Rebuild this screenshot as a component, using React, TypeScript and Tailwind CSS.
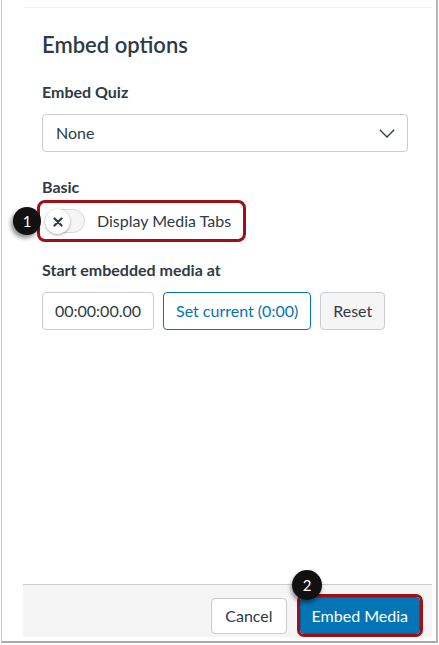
import React from "react";

function ChevronDown() {
  return (
    <svg width="16" height="9" viewBox="0 0 16 9" fill="none">
      <polyline points="0.8,0.8 8,8 15.2,0.8" stroke="#2d3b45" strokeWidth="1.3" fill="none" />
    </svg>
  );
}

function XIcon() {
  return (
    <svg width="10" height="10" viewBox="0 0 10 10">
      <path d="M1.5 1.5 L8.5 8.5 M8.5 1.5 L1.5 8.5" stroke="#2d3b45" strokeWidth="2.2" strokeLinecap="round" />
    </svg>
  );
}

export default function App() {
  return (
    <div className="relative w-[439px] h-[645px] bg-white font-['Lato','Noto_Sans',sans-serif] text-[#2d3b45]">
      <div className="ml-[1px] w-[437px] h-[643px] border-l border-r-2 border-b-2 border-l-[#c9c9c9] border-r-[#b5b5b5] border-b-[#a9a9a9] flex flex-col">
        <div className="ml-[21px] w-[409px] mt-[7px] border-t border-[#f3f3f3] flex-1 flex flex-col">
          <div className="pl-[19px] pr-[24px] flex flex-col">
            <div className="mt-[24px] text-[22px] leading-[25px] font-semibold">Embed options</div>
            <div className="mt-[23px] text-base leading-6 font-bold">Embed Quiz</div>
            <div className="mt-[10px] h-[38px] border border-[#c7cdd1] rounded-[4px] flex items-center justify-between pl-[13px] pr-[12px]">
              <span className="text-base">None</span>
              <ChevronDown />
            </div>
            <div className="mt-[23px] text-base leading-6 font-bold">Basic</div>
            <div className="mt-[1px] -ml-[5px] self-start h-[42px] border-[3px] border-[#a00f16] rounded-[8px] flex items-center pl-[5px] pr-[12px]">
              <div className="relative w-[40px] h-[24px] rounded-full bg-[#f5f5f5] border border-[#d7dadd]">
                <div className="absolute -left-[1px] -top-[1px] w-[25px] h-[25px] rounded-full bg-white shadow-[0_1px_3px_rgba(0,0,0,0.35)] flex items-center justify-center">
                  <XIcon />
                </div>
              </div>
              <span className="ml-[12px] text-base">Display Media Tabs</span>
            </div>
            <div className="mt-[16px] text-base leading-6 font-bold">Start embedded media at</div>
            <div className="mt-[10px] flex items-center gap-[9px]">
              <div className="w-[112px] h-[38px] border border-[#c7cdd1] rounded-[4px] flex items-center pl-[12px] text-base">00:00:00.00</div>
              <div className="h-[38px] border border-[#0374b5] rounded-[4px] flex items-center px-[12px] text-base text-[#0374b5]">Set current (0:00)</div>
              <div className="h-[38px] border border-[#c7cdd1] bg-[#f5f5f5] rounded-[4px] flex items-center px-[12px] text-base">Reset</div>
            </div>
          </div>
          <div className="flex-1" />
          <div className="mb-[4px] h-[53px] border-t border-[#c7cdd1] bg-[#f5f5f5] flex items-start justify-end pr-[9px] pt-[9px] gap-[10px]">
            <div className="mt-[4px] h-[36px] px-[13px] bg-white border border-[#c7cdd1] rounded-[4px] flex items-center text-base">Cancel</div>
            <div className="border-[3px] border-[#a00f16] rounded-[7px]">
              <div className="h-[37px] px-[11px] bg-[#0374b5] border border-[#03609a] rounded-[4px] flex items-center text-base text-white">Embed Media</div>
            </div>
          </div>
        </div>
      </div>
      <div className="absolute left-[13px] top-[207px] w-[28px] h-[28px] rounded-full bg-[#111] text-white text-[15px] flex items-center justify-center shadow-[-2px_3px_4px_rgba(0,0,0,0.45)]">1</div>
      <div className="absolute left-[292px] top-[570px] w-[30px] h-[30px] rounded-full bg-[#111] text-white text-[15px] flex items-center justify-center shadow-[-1px_3px_4px_rgba(0,0,0,0.45)]">2</div>
    </div>
  );
}
